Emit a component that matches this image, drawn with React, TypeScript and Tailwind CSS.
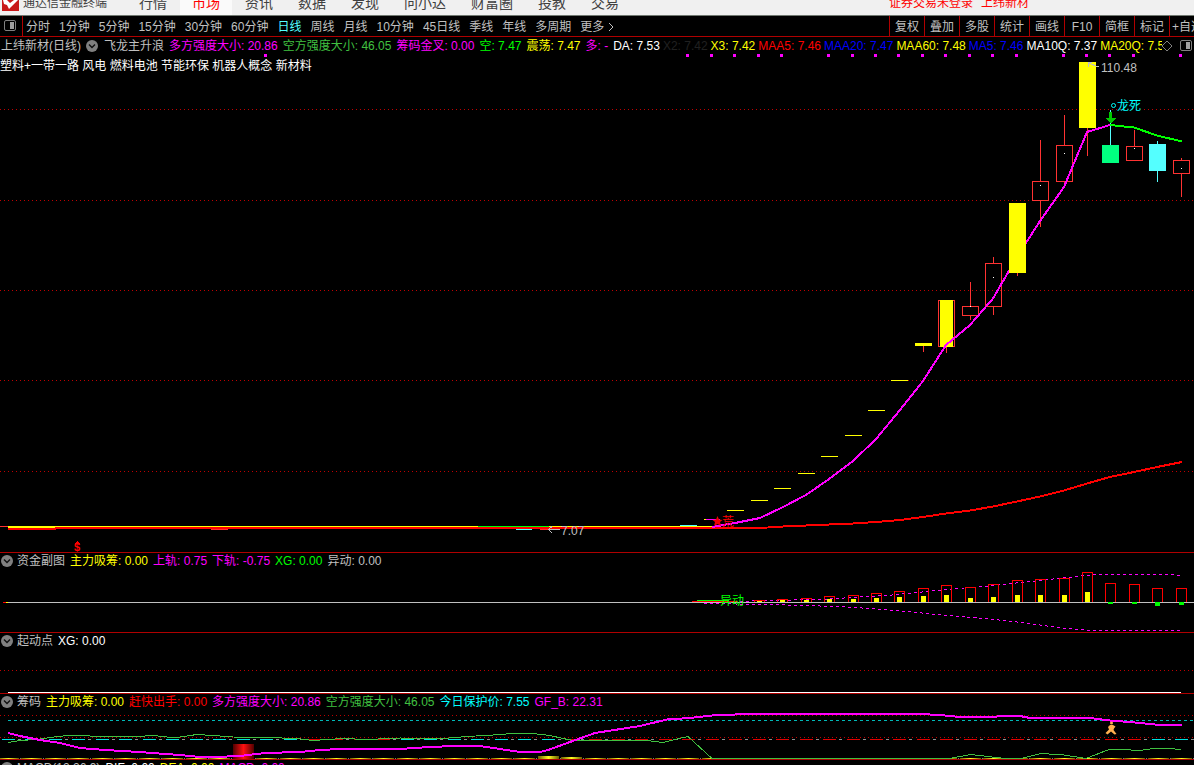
import React from "react";

type Metric = { label: string; tone: string };

const navItems = ["行情", "市场", "资讯", "数据", "发现", "问小达", "财富圈", "投教", "交易"];

const periods = [
  "分时", "1分钟", "5分钟", "15分钟", "30分钟", "60分钟", "日线", "周线",
  "月线", "10分钟", "45日线", "季线", "年线", "多周期",
];

const tools = ["复权", "叠加", "多股", "统计", "画线", "F10", "简框", "标记"];

const signalMetrics: Metric[] = [
  { label: "飞龙主升浪", tone: "text-[#c0c0c0]" },
  { label: "多方强度大小: 20.86", tone: "text-[#ff00ff]" },
  { label: "空方强度大小: 46.05", tone: "text-[#40c040]" },
  { label: "筹码金叉: 0.00", tone: "text-[#ff00ff]" },
  { label: "空: 7.47", tone: "text-[#00ff00]" },
  { label: "震荡: 7.47", tone: "text-[#ffff00]" },
  { label: "多: -", tone: "text-[#ff00ff]" },
];

const averageMetrics: Metric[] = [
  { label: "DA: 7.53", tone: "text-white" },
  { label: "X2: 7.42", tone: "text-[#202020]" },
  { label: "X3: 7.42", tone: "text-[#ffff00]" },
  { label: "MAA5: 7.46", tone: "text-[#ff0000]" },
  { label: "MAA20: 7.47", tone: "text-[#0000ff]" },
  { label: "MAA60: 7.48", tone: "text-[#ffff00]" },
  { label: "MA5: 7.46", tone: "text-[#0000ff]" },
  { label: "MA10Q: 7.37", tone: "text-white" },
  { label: "MA20Q: 7.54", tone: "text-[#ffff00]" },
];

const fundMetrics: Metric[] = [
  { label: "资金副图", tone: "text-[#c0c0c0]" },
  { label: "主力吸筹: 0.00", tone: "text-[#ffff00]" },
  { label: "上轨: 0.75", tone: "text-[#ff00ff]" },
  { label: "下轨: -0.75", tone: "text-[#ff00ff]" },
  { label: "XG: 0.00", tone: "text-[#00ff00]" },
  { label: "异动: 0.00", tone: "text-[#c0c0c0]" },
];

const startMetrics: Metric[] = [
  { label: "起动点", tone: "text-[#c0c0c0]" },
  { label: "XG: 0.00", tone: "text-white" },
];

const chipMetrics: Metric[] = [
  { label: "筹码", tone: "text-[#c0c0c0]" },
  { label: "主力吸筹: 0.00", tone: "text-[#ffff00]" },
  { label: "赶快出手: 0.00", tone: "text-[#ff0000]" },
  { label: "多方强度大小: 20.86", tone: "text-[#ff00ff]" },
  { label: "空方强度大小: 46.05", tone: "text-[#40c040]" },
  { label: "今日保护价: 7.55", tone: "text-[#00ffff]" },
  { label: "GF_B: 22.31", tone: "text-[#ff00ff]" },
];

const macdMetrics: Metric[] = [
  { label: "MACD(12,26,9)", tone: "text-[#c0c0c0]" },
  { label: "DIF: 0.00", tone: "text-white" },
  { label: "DEA: 0.00", tone: "text-[#ffff00]" },
  { label: "MACD: 0.00", tone: "text-[#ff00ff]" },
];

const signalDots = [
  265, 687, 711, 734, 758, 781, 828, 852, 875, 898, 922, 945, 969, 992, 1016, 1063, 1086, 1109, 1133, 1180,
];

const limitUps = [
  [735, 510], [759, 500], [782, 488], [806, 473], [829, 456], [853, 435], [876, 410], [899, 380],
];

// x centre, body top, body bottom, high, low, close dot
const hollowCandles = [
  [970, 306, 315, 282, 320, 306],
  [993, 263, 306, 257, 315, 277],
  [1040, 181, 200, 140, 227, 185],
  [1064, 145, 181, 115, 186, 153],
  [1134, 146, 160, 130, 160, 148],
  [1181, 160, 173, 158, 197, 168],
];

// x centre, outline top, inner bar top
const fundBars = [
  [759, 600, 601], [782, 599, 600], [806, 598, 600], [829, 596, 599], [853, 595, 599],
  [876, 593, 598], [899, 591, 597], [923, 588, 596], [946, 585, 595], [970, 587, 598],
  [993, 584, 597], [1017, 580, 595], [1040, 579, 595], [1064, 578, 595], [1087, 572, 592],
  [1110, 583, 602], [1134, 584, 602], [1157, 588, 602], [1181, 588, 602],
];

const fundDrops = [[1110, 2], [1134, 2], [1157, 4], [1181, 3]];

const barCentres = Array.from({ length: 51 }, (_, i) => Math.round(8 + i * 23.46));

function ChevronBadge() {
  return (
    <button type="button" aria-label="指标菜单" className="mr-px size-3 shrink-0">
      <svg viewBox="0 0 12 12" className="size-3">
        <circle cx="6" cy="6" r="6" fill="#808080" />
        <path d="M3 4.6 6 7.6 9 4.6" fill="none" stroke="#101010" strokeWidth="1.4" />
      </svg>
    </button>
  );
}

function SplitIcon() {
  return (
    <svg viewBox="0 0 12 12" className="size-3 shrink-0">
      <rect x="0.5" y="0.5" width="11" height="10" rx="1.5" fill="none" stroke="#808080" />
      <rect x="6" y="2" width="4" height="7" fill="#a0a0a0" />
    </svg>
  );
}

function Metrics({ items }: { items: Metric[] }) {
  return (
    <>
      {items.map((m) => (
        <span key={m.label} className={m.tone}>
          {m.label}
        </span>
      ))}
    </>
  );
}

function PanelHeader({ items }: { items: Metric[] }) {
  return (
    <header className="flex h-[17px] items-center gap-[3px] pb-px pl-px">
      <ChevronBadge />
      <div className="flex gap-[5px] whitespace-nowrap">
        <Metrics items={items} />
      </div>
    </header>
  );
}

function DottedLine({ y }: { y: number }) {
  return <path d={`M0 ${y}.5H1194`} stroke="#c00000" strokeDasharray="1 3" />;
}

function MainChart() {
  return (
    <svg
      viewBox="0 54 1194 498"
      preserveAspectRatio="none"
      shapeRendering="crispEdges"
      className="block h-[498px] w-full"
      fill="none"
    >
      {[109, 200, 290, 380, 471].map((y) => (
        <DottedLine key={y} y={y} />
      ))}
      {signalDots.map((x) => (
        <rect key={x} x={x - 1} y="54" width="3" height="3" fill="#ff00ff" />
      ))}

      <path d="M0 526.5H8" stroke="#ff3232" />
      <rect x="8" y="526" width="704" height="1" fill="#ffff00" />
      <rect x="478" y="526" width="71" height="1" fill="#00ff00" />
      <rect x="211" y="529" width="17" height="1" fill="#ff3232" />
      <rect x="516" y="529" width="16" height="1" fill="#54ffff" />
      <rect x="540" y="529" width="9" height="1" fill="#ff3232" />
      <rect x="680" y="525" width="17" height="1" fill="#54ffff" />
      <rect x="704" y="519" width="16" height="1" fill="#ff00ff" />
      <rect x="704" y="519" width="2" height="1" fill="#ffff00" />

      {limitUps.map(([x, y]) => (
        <rect key={x} x={x - 8} y={y} width="17" height="1" fill="#ffff00" />
      ))}

      {hollowCandles.map(([x, top, bottom, high, low, dot]) => (
        <g key={x}>
          <path d={`M${x}.5 ${high}V${top}M${x}.5 ${bottom}V${low}`} stroke="#ff3232" />
          <rect x={x - 7.5} y={top + 0.5} width="16" height={bottom - top} stroke="#ff3232" />
          <rect x={x} y={dot} width="1" height="1" fill="#ffffff" />
        </g>
      ))}

      <path d="M923.5 346V352M946.5 346V353M1017.5 273V276M1087.5 128V156" stroke="#ff3232" />
      <rect x="915" y="343" width="17" height="3" fill="#ffff00" />
      <rect x="938.5" y="300.5" width="16" height="46" stroke="#ff3232" />
      <rect x="940" y="300" width="13" height="47" fill="#ffff00" />
      <path d="M1110.5 110V145M1157.5 141V182" stroke="#54ffff" />
      <rect x="1102" y="145" width="17" height="18" fill="#00ff80" />
      <rect x="1149" y="144" width="17" height="27" fill="#54ffff" />

      <path
        d="M8 528H760L783 526.5 829 524.5 853 523.5 876 522 900 520 923 517 946 513.5 970 510.5 993 506.5 1017 501.5 1040 496.5 1064 490.5 1087 483.5 1110 477 1134 472 1157 467 1182 462"
        stroke="#ff0000"
        strokeWidth="2"
      />
      <rect x="8" y="527" width="47" height="1" fill="#ffff00" />
      <rect x="8" y="528" width="48" height="2" fill="#ff0000" />
      <path
        d="M712 527 735 523 760 518 782 507.5 806 495 829 479 853 461 876 439 900 410 923 381 946 345 970 325 993 298.5 1017 257 1040 221 1064 187 1087 132 1110 125"
        stroke="#ff00ff"
        strokeWidth="2"
      />
      <path d="M1110 125 1134 127.5 1157 135.5 1182 141.5" stroke="#00ff00" strokeWidth="2" />
      <rect x="1009" y="203" width="17" height="70" fill="#ffff00" />
      <rect x="1079" y="62" width="17" height="66" fill="#ffff00" />

      <rect x="1109" y="112" width="3" height="7" fill="#00c800" />
      <path d="M1106 118H1116L1111 124Z" fill="#00c800" />
      <circle cx="1113.5" cy="105.5" r="2" stroke="#00ffff" shapeRendering="auto" />
      <text x="1117" y="110" fill="#00ffff" fontSize="12">龙死</text>

      <path d="M1099 67 1088 63M1088 67V62H1092" stroke="#c0c0c0" />
      <text x="1101" y="72" fill="#c0c0c0" fontSize="12">110.48</text>
      <path d="M560 529.5H548M552 526.5 548.5 529.5 552 533" stroke="#c0c0c0" />
      <text x="561" y="535" fill="#c0c0c0" fontSize="12">7.07</text>

      <path
        d="M717.5 516 719 519.5 722.5 520 720 522 721 526 717.5 524 714 526 715 522 712.5 520 716 519.5Z"
        fill="#f00000"
        shapeRendering="auto"
      />
      <text x="722" y="526" fill="#ff0000" fontSize="12">荒</text>

      <path d="M75 543.5 77.5 540.5 80 543.5Z" fill="#ff0000" />
      <text x="74" y="551" fill="#ff0000" fontSize="11" fontWeight="bold">$</text>
    </svg>
  );
}

function FundChart() {
  return (
    <svg
      viewBox="0 570 1194 62"
      preserveAspectRatio="none"
      shapeRendering="crispEdges"
      className="block h-[62px] w-full"
      fill="none"
    >
      <g stroke="#ff00ff" strokeDasharray="3 3">
        <path d="M704 602.5 767 600.5 817 599.5 837 598.5 867 596.5 887 595.5 917 592.5 937 590.5 957 588.5 984 586.5 1011 583.5 1031 581.5 1057 578.5 1077 576.5 1094 574.5H1167L1182 575.5" />
        <path d="M704 603.5 767 604.5 837 606.5 870 608.5 917 612.5 935 614.5 985 618.5 1030 623.5 1057 627.5 1077 629.5 1090 630.5H1182" />
      </g>
      {fundBars.map(([x, top, inner]) => (
        <g key={x}>
          <path d={`M${x - 4.5} 602V${top + 0.5}H${x + 5.5}V602`} stroke="#ff0000" />
          {inner < 602 && <rect x={x - 2} y={inner} width="5" height={602 - inner} fill="#ffff00" />}
        </g>
      ))}
      <rect x="692" y="601" width="46" height="2" fill="#ff0000" />
      <rect x="697" y="600" width="32" height="1" fill="#00ff00" />
      <rect x="8" y="602" width="1186" height="1" fill="#c0c0c0" />
      <rect x="3" y="602" width="3" height="1" fill="#ff0000" />
      <rect x="6" y="602" width="2" height="1" fill="#ffff00" />
      {fundDrops.map(([x, h]) => (
        <rect key={x} x={x - 2} y="602" width="5" height={h} fill="#00ff00" />
      ))}
      <text x="720" y="605" fill="#00ff00" fontSize="12">异动</text>
    </svg>
  );
}

function StartChart() {
  return (
    <svg
      viewBox="0 650 1194 43"
      preserveAspectRatio="none"
      shapeRendering="crispEdges"
      className="block h-[43px] w-full"
      fill="none"
    >
      <DottedLine y={670} />
      <rect x="8" y="692" width="1173" height="1" fill="#ffffff" />
    </svg>
  );
}

function phaseColour(x: number) {
  if (x < 300 || (x > 385 && x < 557) || x > 1148) return "#00e0e0";
  return "#e00000";
}

function ChipChart() {
  return (
    <svg
      viewBox="0 711 1194 48"
      preserveAspectRatio="none"
      shapeRendering="crispEdges"
      className="block h-[48px] w-full"
      fill="none"
    >
      <defs>
        <linearGradient id="heat">
          <stop offset="0" stopColor="#500000" />
          <stop offset="0.5" stopColor="#ff1010" />
          <stop offset="1" stopColor="#500000" />
        </linearGradient>
        <linearGradient id="gold">
          <stop offset="0" stopColor="#6a6000" />
          <stop offset="0.5" stopColor="#ffff20" />
          <stop offset="1" stopColor="#6a6000" />
        </linearGradient>
      </defs>
      <DottedLine y={715} />
      <DottedLine y={737} />
      <path d="M8 720.5H1194" stroke="#00b8b8" strokeDasharray="3 3" />
      {barCentres.map((x) => (
        <g key={x}>
          <rect x={x - 6} y="739" width="13" height="1" fill={phaseColour(x)} />
          <rect x={x + 10} y="739" width="3" height="1" fill="#909090" />
          <rect x={x - 10} y="758" width="21" height="1" fill="url(#gold)" />
          <rect x={x + 12} y="758" width="1" height="1" fill="#808080" />
        </g>
      ))}
      <rect x="233" y="744" width="21" height="15" fill="url(#heat)" />
      <rect x="538" y="756" width="21" height="3" fill="url(#gold)" />
      <rect x="561" y="757" width="21" height="2" fill="url(#gold)" />
      <path
        d="M8 742.5 20 740.5 37 739.5 50 737.5 68 735.5 90 736 100 736.5 137 736.5 153 735.5 167 737 180 737 197 734.5 213 735.5 233 737 267 737.5 297 738.5 313 740.5 343 738.5 367 739.5 400 738 443 738.5 467 736.5 493 735 513 733.5 533 733.5 550 735.5 563 738.5 573 740.5 647 740.5 663 742.5 677 739 688 736.5 712 758.5H949L971 754.5 1005 758.5H1021L1041 753.5 1064 755 1086 758.5 1109 749.5 1122 749.5 1140 750.5 1154 748.5 1169 748.5 1181 749.5"
        stroke="#40c040"
      />
      <path
        d="M8 733 20 736 40 740 60 743 80 748 105 750 140 752 165 754 180 755 200 757 215 757 240 756 265 753 300 752 320 750 340 749 400 749 430 747 455 746 480 746 500 749 520 752 540 752 548 750 570 742 595 733 640 726 667 719.5 690 718 712 715.5 735 714.5 760 714 923 714 945 715.5 960 717 990 717 1005 716 1020 716 1030 718 1090 718 1110 720.5 1130 722 1160 725 1182 725"
        stroke="#ff00ff"
        strokeWidth="2"
      />
      <g fill="#ffb050" shapeRendering="auto">
        <circle cx="1111.5" cy="723" r="1.5" />
        <path d="M1110 725H1113L1115.500 726.500 1114 728.500 1113.500 730 1116.500 734 1114.500 734.500 1111 731.500 1107.500 734.500 1105.500 733 1109 729.500 1108 727Z" />
      </g>
    </svg>
  );
}

export default function App() {
  return (
    <div className="flex h-screen flex-col overflow-hidden bg-black font-['Liberation_Sans','Noto_Sans_CJK_SC',sans-serif] text-[12px] leading-4 text-[#c0c0c0]">
      <header className="flex h-4 shrink-0 overflow-hidden border-b border-[#707870] bg-[#f0f0f0] whitespace-nowrap text-[#404040]">
        <div className="flex w-[127px] shrink-0 gap-1 pl-0.5">
          <svg viewBox="0 0 17 11" className="h-[11px] w-[17px]">
            <rect width="17" height="11" fill="#c81818" />
            <path d="M1 0H5L8 3 12 0H16L9 7 7 9 5 5 2 4Z" fill="#ffffff" />
          </svg>
          <h1 className="leading-[7px]">通达信金融终端</h1>
        </div>
        <nav className="flex gap-px text-[14px] leading-[7px]">
          {navItems.map((item) => (
            <a
              key={item}
              href="#"
              className={item === "市场" ? "bg-[#fafafa] px-3 text-[#ff0000]" : "px-3"}
            >
              {item}
            </a>
          ))}
        </nav>
        <div className="ml-auto flex gap-2 pr-[165px] leading-[7px] text-[#ff0000]">
          <span>证券交易未登录</span>
          <span>上纬新材</span>
        </div>
      </header>

      <div className="flex h-[21px] shrink-0 items-stretch overflow-hidden border-b border-[#b00000] whitespace-nowrap">
        <button type="button" aria-label="切换侧栏" className="flex w-[23px] shrink-0 items-center border-r border-[#b00000] pl-1">
          <SplitIcon />
        </button>
        <div className="flex items-center gap-[9px] pt-px pl-[3px]">
          {periods.map((p) => (
            <button key={p} type="button" className={p === "日线" ? "text-[#54ffff]" : ""}>
              {p}
            </button>
          ))}
          <button type="button" className="flex items-center gap-1">
            更多
            <svg viewBox="0 0 6 10" className="h-2.5 w-1.5">
              <path d="M1 1 5 5 1 9" fill="none" stroke="#c0c0c0" />
            </svg>
          </button>
        </div>
        <div className="ml-auto flex shrink-0">
          {tools.map((t) => (
            <button key={t} type="button" className="w-[35px] border-l border-[#b00000] pt-px">
              {t}
            </button>
          ))}
          <button type="button" className="w-[25px] overflow-hidden border-l border-[#b00000] pt-px pl-0.5 text-left">
            +自选
          </button>
        </div>
      </div>

      <section className="relative shrink-0">
        <header className="flex h-[17px] items-center gap-[5px] pr-0.5 pl-px">
          <div className="flex min-w-0 flex-1 items-center gap-[5px] overflow-hidden whitespace-nowrap">
            <span>上纬新材(日线)</span>
            <ChevronBadge />
            <Metrics items={signalMetrics} />
            <div className="flex gap-[3px]">
              <Metrics items={averageMetrics} />
            </div>
          </div>
          <div className="-ml-1.5 flex shrink-0 items-center gap-[7px]">
            <svg viewBox="0 0 12 12" className="size-3">
              <path d="M6 1 11 6 6 11 1 6Z" fill="none" stroke="#808080" />
            </svg>
            <SplitIcon />
          </div>
        </header>
        <MainChart />
        <p className="absolute top-[21px] left-0 text-white">
          塑料+一带一路 风电 燃料电池 节能环保 机器人概念 新材料
        </p>
      </section>

      <section className="shrink-0 border-t border-[#b00000]">
        <PanelHeader items={fundMetrics} />
        <FundChart />
      </section>

      <section className="shrink-0 border-t border-[#b00000]">
        <PanelHeader items={startMetrics} />
        <StartChart />
      </section>

      <section className="shrink-0 border-t border-[#b00000]">
        <PanelHeader items={chipMetrics} />
        <ChipChart />
      </section>

      <section className="shrink-0 border-t border-[#b00000]">
        <PanelHeader items={macdMetrics} />
      </section>
    </div>
  );
}
